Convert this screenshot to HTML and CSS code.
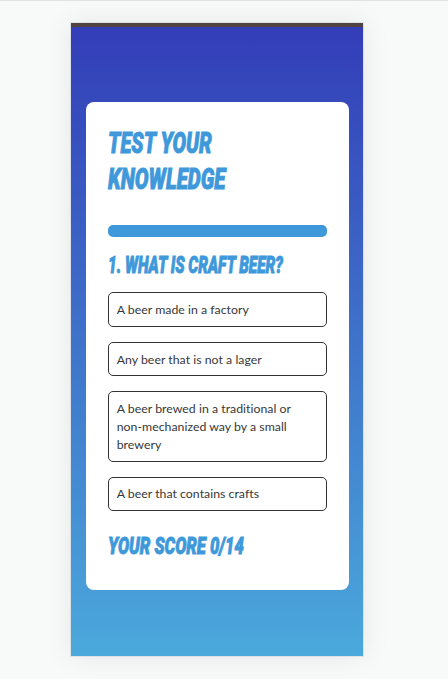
FILE: index.html
```html
<!DOCTYPE html>
<html lang="en">
<head>
<meta charset="utf-8">
<title>Test your knowledge</title>
<link rel="stylesheet" href="styles.css">
</head>
<body>
<main class="phone">
  <section class="card">
    <h1 class="title"><span class="comic test">TEST YOUR</span><span class="comic knowledge">KNOWLEDGE</span></h1>
    <div class="progress"></div>
    <h2 class="question"><span class="comic ask">1. WHAT IS CRAFT BEER?</span></h2>
    <div class="answers">
      <button class="answer">A beer made in a factory</button>
      <button class="answer">Any beer that is not a lager</button>
      <button class="answer">A beer brewed in a traditional or<br>non-mechanized way by a small<br>brewery</button>
      <button class="answer">A beer that contains crafts</button>
    </div>
    <h2 class="score"><span class="comic points">YOUR SCORE 0/14</span></h2>
  </section>
</main>
</body>
</html>
```
FILE: styles.css
```css
* { box-sizing: border-box; }
body {
  margin: 0;
  height: 679px;
  padding: 22px 84px 0 71px;
  border-top: 1px solid #dfe1e5;
  background: #f8faf9;
  overflow: hidden;
}
.phone {
  width: 292px;
  height: 633px;
  padding: 75px 14px 0 15px;
  border-top: 4px solid #50433f;
  background: linear-gradient(#333db8, #4ba9dc);
  box-shadow: 0 0 0 1px rgba(190, 200, 210, .4), 0 0 28px rgba(0, 0, 0, .08);
}
.card {
  width: 263.4px;
  height: 487.5px;
  padding: 23px 22.4px 0 22.4px;
  border-radius: 8px;
  background: #fff;
}
h1, h2 {
  margin: 0;
  font-family: Roboto, sans-serif;
  font-style: italic;
  font-weight: 900;
  color: #3e98da;
  white-space: nowrap;
}
.comic {
  display: block;
  width: max-content;
  transform-origin: 0 50%;
  -webkit-text-stroke: .9px #3e98da;
}
.title { height: 100px; font-size: 29.5px; line-height: 36px; }
.test { transform: scaleX(.686); }
.knowledge { transform: scaleX(.697); }
.progress { height: 12px; border-radius: 5px; background: #3e98da; }
.question { margin-top: 14px; font-size: 23px; line-height: 28px; }
.ask { transform: translateY(1px) scaleX(.67); }
.answers { display: flex; flex-direction: column; gap: 15px; margin-top: 13.4px; }
.answer {
  width: 218.6px;
  min-height: 34.4px;
  padding: 7.8px 7.3px 6.6px;
  border: 1px solid #333;
  border-radius: 5px;
  background: #fff;
  color: #383838;
  font: 12.3px/18px Lato, sans-serif;
  font-variant-ligatures: none;
  letter-spacing: .02px;
  text-align: left;
}
.score { margin-top: 21px; font-size: 23px; line-height: 28px; }
.points { transform: translateY(1px) scaleX(.724); }
```
